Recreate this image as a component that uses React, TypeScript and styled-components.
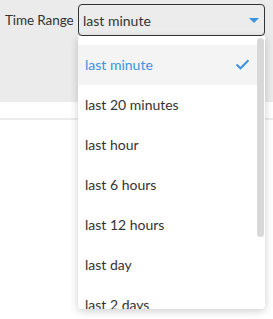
import React from "react";
import styled, { createGlobalStyle } from "styled-components";

const GlobalStyle = createGlobalStyle`
  html, body {
    margin: 0;
    padding: 0;
    background: #ffffff;
    font-family: Lato, "Open Sans", "Liberation Sans", sans-serif;
    color: #333333;
  }
`;

const options = [
  "last minute",
  "last 20 minutes",
  "last hour",
  "last 6 hours",
  "last 12 hours",
  "last day",
  "last 2 days",
  "last week",
  "last 2 weeks",
];

const App = () => {
  const selected = options[0];
  return (
    <Page>
      <GlobalStyle />
      <Header>
        <Label>Time Range</Label>
        <SelectWrap>
          <SelectBox>
            <SelectValue>{selected}</SelectValue>
            <Caret />
          </SelectBox>
          <Menu>
            <List>
              {options.map((opt) => (
                <Option key={opt} active={opt === selected}>
                  <span>{opt}</span>
                  {opt === selected && (
                    <svg width="15" height="11" viewBox="0 0 15 11">
                      <path
                        d="M1.5 5.5 L5.5 9.3 L13.5 1.3"
                        fill="none"
                        stroke="#3b93e0"
                        strokeWidth="2"
                      />
                    </svg>
                  )}
                </Option>
              ))}
            </List>
            <ScrollThumb />
          </Menu>
        </SelectWrap>
      </Header>
      <SubBar />
      <Body />
    </Page>
  );
};

export default App;

const Page = styled.div`
  width: 273px;
  min-height: 319px;
`;

const Header = styled.div`
  height: 102px;
  background: #ebebeb;
  display: flex;
  align-items: flex-start;
  gap: 5px;
  padding: 4px 0 0 5px;
  box-sizing: border-box;
`;

const Label = styled.div`
  width: 68px;
  white-space: nowrap;
  height: 32px;
  line-height: 32px;
  font-size: 13.5px;
  letter-spacing: -0.1px;
  color: #333333;
`;

const SelectWrap = styled.div`
  position: relative;
  width: 187px;
`;

const SelectBox = styled.div`
  height: 32px;
  box-sizing: border-box;
  border: 1px solid #333333;
  border-radius: 4px;
  display: flex;
  align-items: center;
  justify-content: space-between;
  padding: 0 4px 0 4px;
  background: #ececec;
`;

const SelectValue = styled.span`
  font-size: 14px;
  color: #333333;
`;

const Caret = styled.span`
  width: 0;
  height: 0;
  border-left: 5px solid transparent;
  border-right: 5px solid transparent;
  border-top: 5px solid #3b93e0;
  margin-right: 1px;
`;

const Menu = styled.div`
  position: absolute;
  top: 32px;
  left: 0;
  width: 187px;
  height: 273px;
  background: #ffffff;
  border-radius: 0 0 4px 4px;
  box-shadow: 0 2px 8px rgba(0, 0, 0, 0.2);
  overflow: hidden;
  z-index: 10;
`;

const List = styled.div`
  padding: 9px 8px 9px 0;
`;

const ScrollThumb = styled.div`
  position: absolute;
  top: 2px;
  right: 1px;
  width: 7px;
  height: 199px;
  border-radius: 4px;
  background: #d8d8d8;
`;

const Option = styled.div<{ active?: boolean }>`
  height: 40px;
  box-sizing: border-box;
  display: flex;
  align-items: center;
  justify-content: space-between;
  padding: 0 7px 2px 7px;
  font-size: 14px;
  color: ${(p) => (p.active ? "#3b93e0" : "#333333")};
  background: ${(p) => (p.active ? "#f4f4f4" : "transparent")};
`;

const SubBar = styled.div`
  height: 16px;
  border-bottom: 2px solid #ececec;
`;

const Body = styled.div`
  height: 199px;
`;
